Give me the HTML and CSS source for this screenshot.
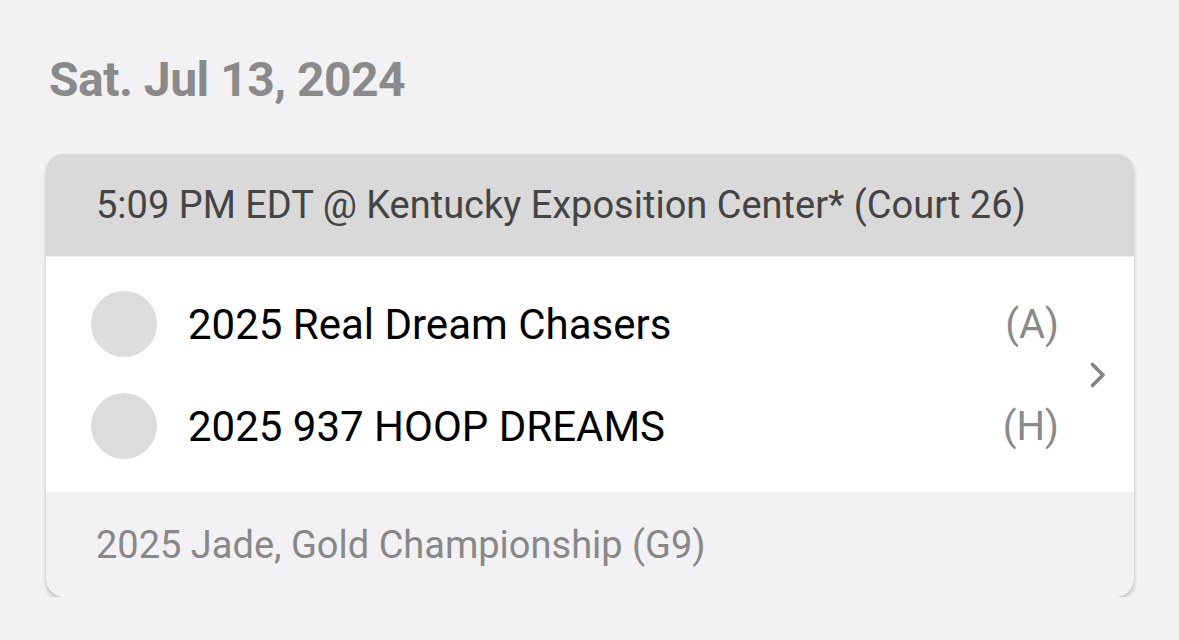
FILE: index.html
```html
<!DOCTYPE html>
<html>
<head>
<meta charset="utf-8">
<link rel="stylesheet" href="styles.css">
</head>
<body>
<main class="page">
  <h1 class="date">Sat. Jul 13, 2024</h1>
  <section class="card">
    <header class="card-head">5:09 PM EDT @ Kentucky Exposition Center* (Court 26)</header>
    <div class="card-body">
      <div class="teams">
        <div class="team">
          <span class="avatar"></span>
          <span class="name">2025 Real Dream Chasers</span>
          <span class="side">(A)</span>
        </div>
        <div class="team">
          <span class="avatar"></span>
          <span class="name">2025 937 HOOP DREAMS</span>
          <span class="side">(H)</span>
        </div>
      </div>
      <svg class="chev" width="18" height="28" viewBox="0 0 18 28"><path d="M3.5 3.5 L14 14 L3.5 24.5" fill="none" stroke="#858585" stroke-width="3.8" stroke-linecap="round" stroke-linejoin="round"/></svg>
    </div>
    <footer class="card-foot">2025 Jade, Gold Championship (G9)</footer>
  </section>
</main>
</body>
</html>
```
FILE: styles.css
```css
html, body {
  margin: 0;
  padding: 0;
  background: #f2f2f4;
}
body {
  font-family: Roboto, "Liberation Sans", sans-serif;
}
.page {
  padding: 52px 0 0 46px;
  width: 1088px;
}
.date {
  margin: 0 0 0 3px;
  font-size: 48px;
  line-height: 56px;
  font-weight: 700;
  color: #8a8a8a;
  letter-spacing: -0.5px;
}
.card {
  margin-top: 46px;
  border-radius: 18px;
  overflow: hidden;
  background: #f2f2f4;
  box-shadow: 0 3px 4px rgba(0,0,0,0.2), 0 0 1px rgba(0,0,0,0.15);
}
.card-head {
  height: 103px;
  box-sizing: border-box;
  display: flex;
  align-items: center;
  padding-left: 50px;
  background: #d9d9d9;
  color: #444;
  font-size: 38px;
  border-bottom: 1px solid #ececec;
}
.card-body {
  background: #fff;
  display: flex;
  align-items: center;
  padding: 16px 0 15px 45px;
}
.teams {
  flex: 1;
  display: flex;
  flex-direction: column;
}
.team {
  height: 102px;
  display: flex;
  align-items: center;
}
.avatar {
  width: 66px;
  height: 66px;
  border-radius: 50%;
  background: #dcdcdc;
  flex: none;
}
.name {
  flex: 1;
  margin-left: 31px;
  font-size: 42px;
  color: #000;
}
.side {
  font-size: 40px;
  color: #8a8a8a;
}
.chev {
  flex: none;
  margin: 0 27px 0 30px;
}
.card-foot {
  height: 105px;
  box-sizing: border-box;
  display: flex;
  align-items: center;
  padding-left: 50px;
  color: #888;
  font-size: 38px;
}
```
